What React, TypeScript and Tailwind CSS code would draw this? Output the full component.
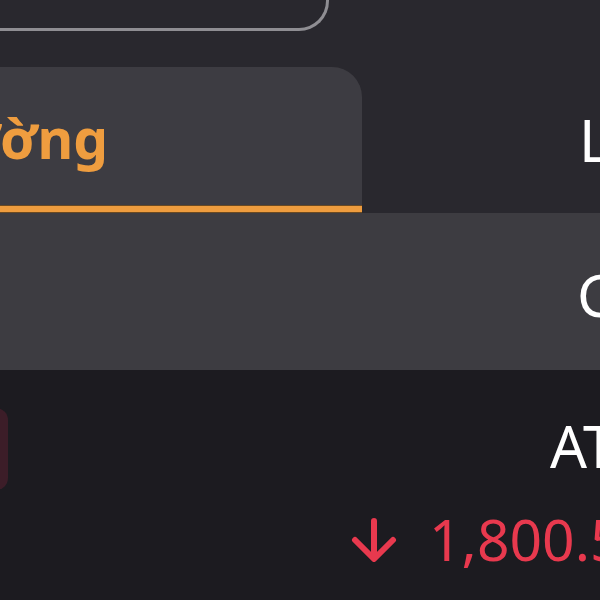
import { useState } from "react";

const TABS = ["Thị trường", "Lệnh chờ"] as const;

function DownArrow() {
  return (
    <svg width="46" height="44" viewBox="0 0 46 44" fill="none" className="shrink-0">
      <path
        d="M23 3v37M4 22l19 19 19-19"
        stroke="#e8394e"
        strokeWidth="6"
        strokeLinecap="round"
        strokeLinejoin="round"
      />
    </svg>
  );
}

export default function App() {
  const [active, setActive] = useState<(typeof TABS)[number]>("Thị trường");

  return (
    <div className="h-[600px] w-[600px] overflow-hidden bg-[#1c1b20] font-['Noto_Sans',sans-serif]">
      <div className="-ml-[300px] flex h-full w-[1200px] flex-col">
        {/* search box */}
        <div className="h-[67px] shrink-0 bg-[#29282e]">
          <div className="h-[31px] w-[629px] rounded-br-[30px] border-b-[3px] border-r-[3px] border-[#8f8e93]" />
        </div>

        {/* tabs */}
        <div className="flex h-[146px] shrink-0 bg-[#29282e]">
          <button
            type="button"
            onClick={() => setActive("Thị trường")}
            className="flex w-[662px] flex-col rounded-tr-[30px] bg-[#3d3c42]"
          >
            <div className="flex flex-1 items-center pt-[4px]">
              <span className="w-[408px] text-right text-[55px] font-bold text-[#ef9d3f]">
                {TABS[0]}
              </span>
            </div>
            <div className="h-[8px] w-full border-y border-[#6b4a22] bg-[#ee9c3e]" />
          </button>
          <button
            type="button"
            onClick={() => setActive("Lệnh chờ")}
            className="flex flex-1 items-center pb-[2px] pl-[217px] text-left"
          >
            <span
              className={`whitespace-nowrap text-[58px] ${active === "Lệnh chờ" ? "text-[#ef9d3f]" : "text-white"}`}
            >
              {TABS[1]}
            </span>
          </button>
        </div>

        {/* table header */}
        <div className="flex h-[157px] shrink-0 items-center bg-[#3d3c41] pl-[877px] pt-[6px]">
          <span className="whitespace-nowrap text-[58px] text-white">Giá khớp</span>
        </div>

        {/* row */}
        <div className="flex flex-1">
          <div className="mt-[38px] h-[82px] w-[308px] rounded-[12px] bg-[#3c1d28]" />
          <div className="ml-[343px] flex flex-col pt-[47px]">
            <span className="pl-[199px] text-[58px] leading-none whitespace-nowrap text-white">
              ATC
            </span>
            <div className="mt-[36px] flex items-center gap-[32px]">
              <DownArrow />
              <span className="text-[57px] leading-none whitespace-nowrap text-[#e8394e]">
                1,800.50
              </span>
            </div>
          </div>
        </div>
      </div>
    </div>
  );
}
